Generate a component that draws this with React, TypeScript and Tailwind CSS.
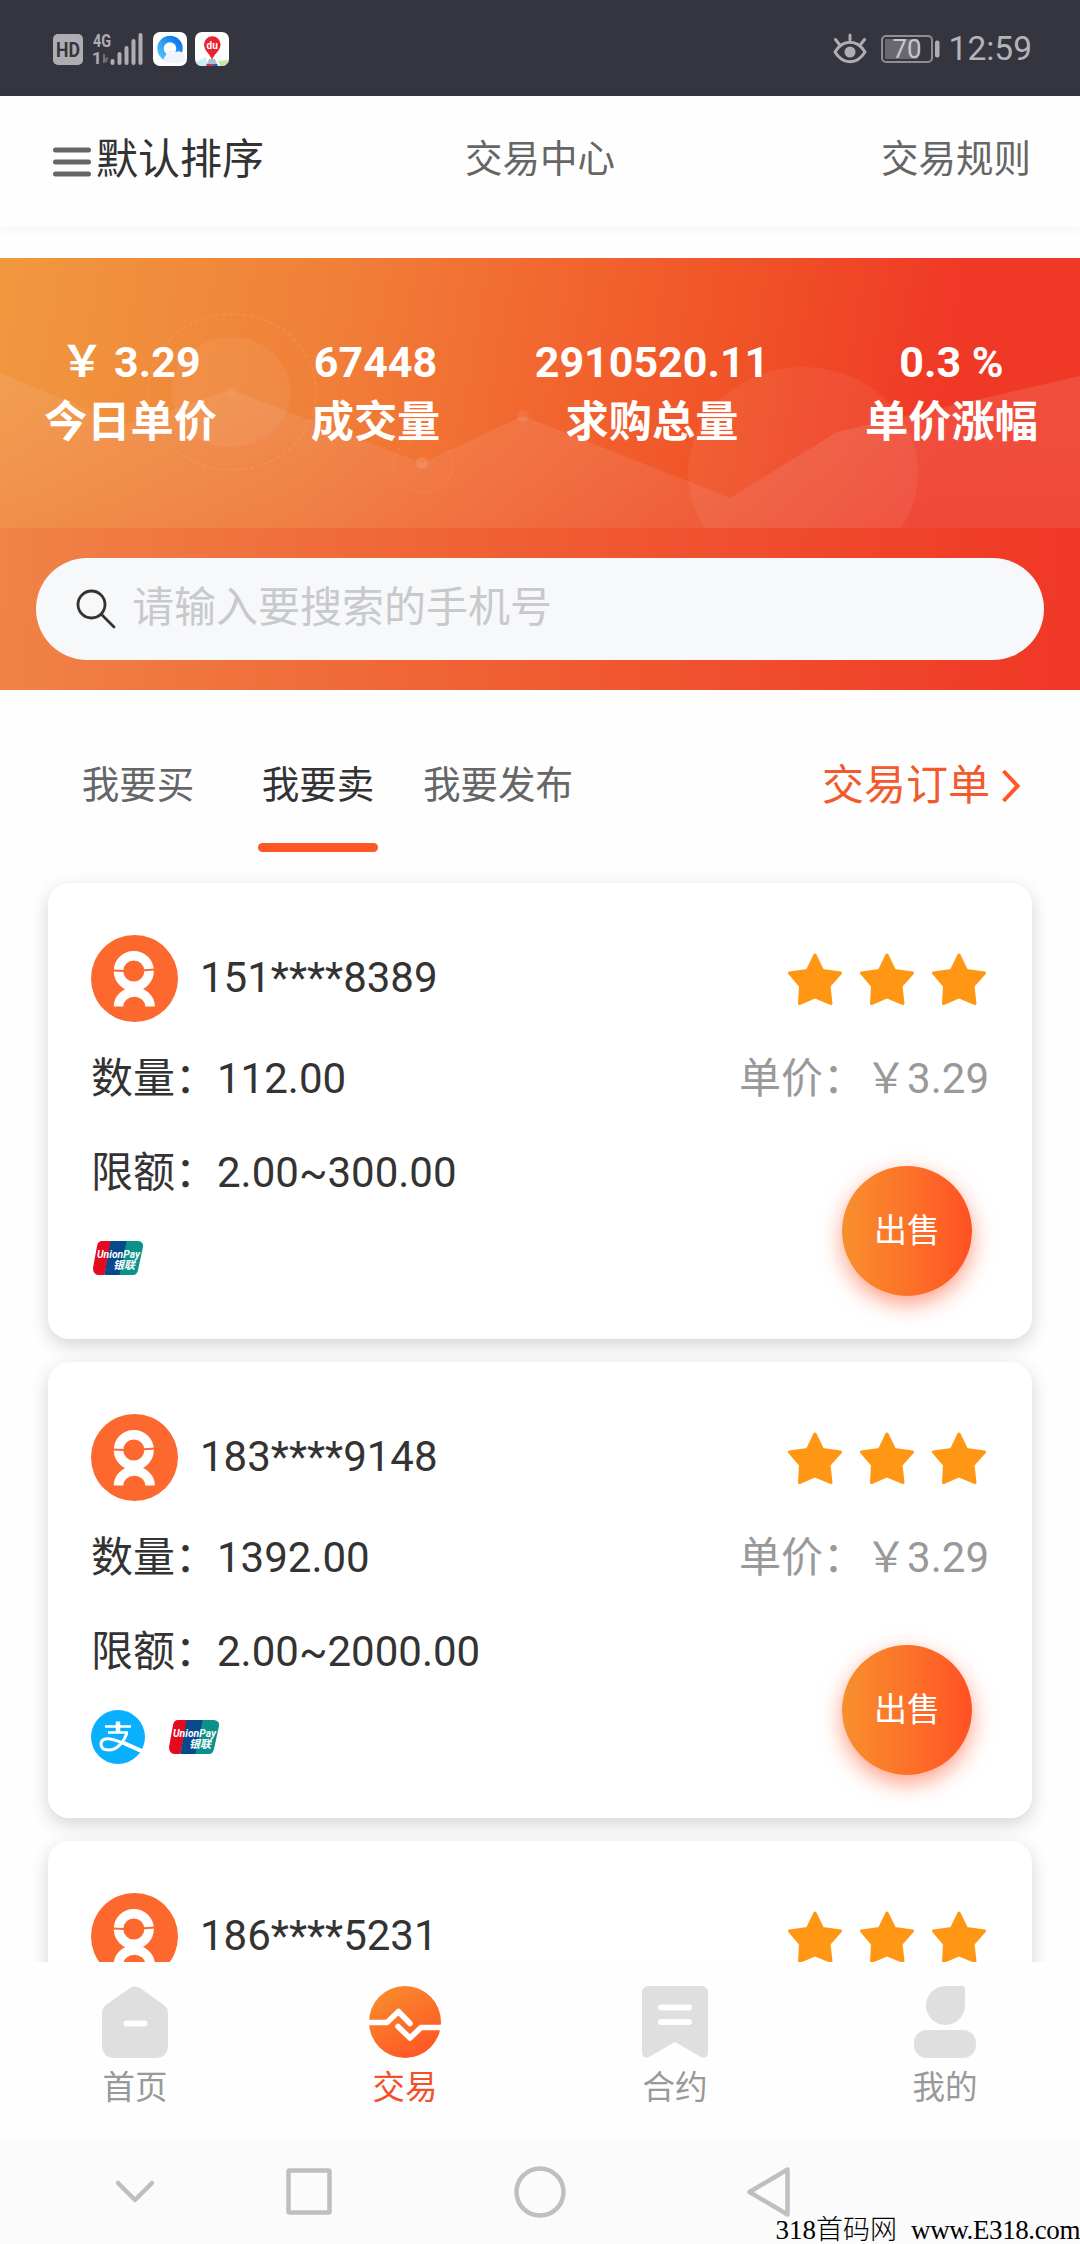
import type { ReactNode } from 'react'

type PayMethod = 'alipay' | 'unionpay'

interface OrderDetail {
  amount: string
  limit: string
  price: string
  methods: PayMethod[]
}

interface Order {
  phone: string
  detail?: OrderDetail
}

const STATS = [
  { value: '￥ 3.29', label: '今日单价', className: 'w-[261px]' },
  { value: '67448', label: '成交量', className: 'w-[229px]' },
  { value: '2910520.11', label: '求购总量', className: 'w-[324px]' },
  { value: '0.3 %', label: '单价涨幅', className: 'w-[275px]' },
]

const TABS = ['我要买', '我要卖', '我要发布']

const ORDERS: Order[] = [
  {
    phone: '151****8389',
    detail: { amount: '112.00', limit: '2.00~300.00', price: '3.29', methods: ['unionpay'] },
  },
  {
    phone: '183****9148',
    detail: { amount: '1392.00', limit: '2.00~2000.00', price: '3.29', methods: ['alipay', 'unionpay'] },
  },
  { phone: '186****5231' },
]

function StatusBar() {
  return (
    <div className="flex h-24 shrink-0 items-center justify-between bg-[#35353f] pt-[2px] pl-[53px] pr-[48px] text-[#b4b4b8]">
      <div className="flex items-center">
        <svg className="h-[31px] w-[30px] overflow-visible" viewBox="0 0 30 31">
          <rect width="30" height="31" rx="5" fill="#aeaeb2" />
          <text x="3" y="22.500" fontSize="20" fontWeight="700" textLength="24" lengthAdjust="spacingAndGlyphs" fill="#35353f">
            HD
          </text>
        </svg>
        <svg className="ml-[10px] h-[34px] w-[51px] overflow-visible" viewBox="0 0 51 34" fill="#aeaeb2">
          <text x="0" y="14.500" fontSize="19" fontWeight="700" textLength="18" lengthAdjust="spacingAndGlyphs">4G</text>
          <text x="-1" y="32" fontSize="17" fontWeight="700">1</text>
          <path d="M11 22v9M11 28l4-2M11 27l3 3" stroke="#6f6f77" strokeWidth="2" />
          <rect x="17.500" y="27" width="4" height="6" rx="2" />
          <rect x="24.500" y="20" width="4" height="13" rx="2" />
          <rect x="31.500" y="14" width="4" height="19" rx="2" />
          <rect x="38.500" y="7" width="4" height="26" rx="2" />
          <rect x="45.500" y="1" width="4" height="32" rx="2" />
        </svg>
        <svg className="ml-[9px] size-[34px]" viewBox="0 0 34 34">
          <defs>
            <linearGradient id="browser" x1="0" y1="1" x2="1" y2="0">
              <stop offset="0" stopColor="#4fc3fa" />
              <stop offset="1" stopColor="#0b72e8" />
            </linearGradient>
          </defs>
          <rect width="34" height="34" rx="7" fill="#fff" />
          <circle cx="17" cy="16.500" r="9.500" fill="none" stroke="url(#browser)" strokeWidth="6.500" />
          <path d="M12 31a6 6 0 0 1 1-8 6 6 0 0 1 10-3 6 6 0 0 1 8 8q0 3-5 3z" fill="#f1f5fb" />
        </svg>
        <svg className="ml-[8px] size-[34px] overflow-visible" viewBox="0 0 34 34">
          <rect width="34" height="34" rx="7" fill="#fff" />
          <path d="M1 30l10-5 2 9H7q-5 0-6-4z" fill="#cdeef0" />
          <path d="M33 28l-10 1 2 5h3q5-1 5-6z" fill="#c9e5a5" />
          <path d="M14 27h6l3 7H11z" fill="#a9bfd4" />
          <path d="M11.500 32h6v2h-6z" fill="#e02b3c" />
          <path d="M17.500 32h5v2h-5z" fill="#2c5fc4" />
          <path d="M17 28c-1-5-8-9-8-15.500a8.300 8.300 0 0 1 16.600 0C25.500 19 18 23 17 28z" fill="#e8232f" />
          <text x="17.200" y="16.500" fontSize="10" fontWeight="700" fill="#fff" textAnchor="middle">du</text>
        </svg>
      </div>
      <div className="flex items-center">
        <svg className="h-[32px] w-[34px]" viewBox="0 0 34 32" fill="none" stroke="#aeaeb2" strokeWidth="3" strokeLinecap="round">
          <path d="M2 19c8-13 22-13 30 0-8 13-22 13-30 0zM17 7V2M6 11L2.500 6.500M28 11l3.500-4.500" strokeLinejoin="round" />
          <circle cx="17" cy="19" r="5.500" fill="#aeaeb2" stroke="none" />
        </svg>
        <svg className="ml-[14px] h-[28px] w-[59px] overflow-visible" viewBox="0 0 59 28">
          <rect x="1" y="1" width="50" height="26" rx="4" fill="none" stroke="#8e8e94" strokeWidth="2" />
          <rect x="4" y="4" width="33" height="20" rx="1" fill="#68686f" />
          <rect x="54" y="5.500" width="4.500" height="17" rx="2" fill="#aeaeb2" />
          <text x="11.500" y="23" fontSize="26" textLength="29" lengthAdjust="spacingAndGlyphs" fill="#c8c8cc">70</text>
        </svg>
        <span className="ml-[9px] text-[33.500px]">12:59</span>
      </div>
    </div>
  )
}

function Header() {
  return (
    <header className="relative flex h-[130px] shrink-0 items-center justify-between pb-[3px] pl-[53px] pr-[49px] text-[37.5px] text-[#666] shadow-[0_2px_12px_rgba(0,0,0,0.05)]">
      <div className="flex w-[236px] items-center gap-[5px]">
        <svg className="mt-1 h-[30px] w-[38px]" viewBox="0 0 38 30" stroke="#666" strokeWidth="5" strokeLinecap="round">
          <path d="M2.500 3h33M2.500 15h33M2.500 27h33" />
        </svg>
        <span className="shrink-0 text-[42px] text-[#333]">默认排序</span>
      </div>
      <span>交易中心</span>
      <span className="w-[240px] text-right">交易规则</span>
    </header>
  )
}

function BannerArt() {
  return (
    <div className="absolute left-0 top-0 h-[270px] w-full bg-[linear-gradient(100deg,#f1983f_0%,#f08038_30%,#f26930_48%,#f05127_68%,#f03827_86%)]">
      <svg className="h-[270px] w-[1080px]" viewBox="0 0 1080 270" fill="#fff">
        <defs>
          <linearGradient id="hill" x1="0" y1="0" x2="0" y2="1">
            <stop offset="0" stopColor="#f3c3b0" stopOpacity="0.16" />
            <stop offset="1" stopColor="#ee7a70" stopOpacity="0.24" />
          </linearGradient>
        </defs>
        <path d="M0 115L125 167L231 132L422 205L523 158L730 240L837 174L1080 118V270H0z" fill="url(#hill)" />
        <ellipse cx="231" cy="134" rx="59.500" ry="55" fillOpacity="0.06" />
        <ellipse cx="232" cy="134" rx="84" ry="78" fill="none" stroke="#f5b070" strokeOpacity="0.3" strokeWidth="1.500" strokeDasharray="4 3" />
        <ellipse cx="423" cy="207" rx="30" ry="27" fill="none" stroke="#f5b070" strokeOpacity="0.25" strokeDasharray="4 3" />
        <circle cx="231" cy="133" r="5.500" fillOpacity="0.05" />
        <circle cx="422" cy="205" r="6" fillOpacity="0.12" />
        <circle cx="523" cy="158" r="6" fillOpacity="0.08" />
        <ellipse cx="803" cy="215" rx="115" ry="106" fillOpacity="0.06" />
      </svg>
    </div>
  )
}

function Banner() {
  return (
    <section className="relative mt-8 flex h-[432px] shrink-0 flex-col bg-[linear-gradient(92deg,#f08447_0%,#f05f33_47%,#f03826_98%)]">
      <BannerArt />
      <div className="relative -mr-2 flex h-[300px] pt-[77px] font-bold text-white">
        {STATS.map((stat) => (
          <div key={stat.label} className={`${stat.className} shrink-0 text-center`}>
            <div className="text-[43px] leading-[54px]">{stat.value}</div>
            <div className="text-[43.200px] leading-[68px]">{stat.label}</div>
          </div>
        ))}
      </div>
      <div className="relative mx-9 flex h-[102px] items-center rounded-full bg-[#f7f8fa] pl-[40px]">
        <svg className="size-[40px]" viewBox="0 0 40 40" fill="none" stroke="#333" strokeWidth="2.800" strokeLinecap="round">
          <circle cx="15.500" cy="15.500" r="13.500" />
          <path d="M25.500 25.500L38 38" />
        </svg>
        <span className="ml-[16px] pb-[3px] text-[42px] text-[#c8c9cc]">请输入要搜索的手机号</span>
      </div>
    </section>
  )
}

function TabRow() {
  return (
    <div className="flex h-[193px] shrink-0 pl-12 pr-[58px] pt-[62px] text-[37.500px] text-[#666]">
      {TABS.map((tab, i) => (
        <div key={tab} className="flex w-[180px] flex-col items-center">
          <span className={`leading-[66px] ${i === 1 ? 'text-[#333]' : ''}`}>{tab}</span>
          {i === 1 && <div className="mt-[25px] h-[9px] w-[120px] rounded-full bg-[#ff5626]" />}
        </div>
      ))}
      <div className="ml-auto flex h-[66px] items-center gap-[11px] text-[42px] text-[#f2592c]">
        交易订单
        <svg className="mt-[2px] h-[34px] w-[21px]" viewBox="0 0 21 34" fill="none" stroke="#ff5626" strokeWidth="4">
          <path d="M2.500 2l14 15L2.500 32" />
        </svg>
      </div>
    </div>
  )
}

function Avatar() {
  return (
    <svg className="size-[87px]" viewBox="0 0 87 87" fill="none" stroke="#fff">
      <circle cx="43.500" cy="43.500" r="43.500" fill="#fd682f" stroke="none" />
      <circle cx="42.800" cy="36" r="15.300" strokeWidth="9.500" />
      <path d="M27.500 71.500a15.800 14.500 0 0 1 31.600 0" strokeWidth="9.500" />
      <path d="M22 35.500l11 0.500M53 35.200l11-0.700" stroke="#fd682f" strokeWidth="2" />
    </svg>
  )
}

function Star() {
  return (
    <svg className="h-[52px] w-[54px]" viewBox="0 0 54 52" fill="#ff9614" stroke="#ff9614" strokeWidth="3" strokeLinejoin="round">
      <path d="M27 2L34.500 17.500L52.500 20L41 33L43 50.500L27 43.800L11.500 50.500L12.500 33L1.500 20L19.500 17.500z" />
    </svg>
  )
}

function AlipayIcon() {
  return (
    <svg className="size-[54px]" viewBox="0 0 54 54" fill="none" stroke="#fff">
      <circle cx="27" cy="27" r="27" fill="#08b0fd" stroke="none" />
      <path d="M14 16.500h26M17 22.500h20" strokeWidth="2.500" />
      <path d="M27 11.500v11" strokeWidth="4.500" />
      <path d="M36 23c-3 9-10 17-18 17-6 0-8-3-8-6 0-4 4-6 9-5 8 1 17 6 30 12" strokeWidth="3" />
      <path d="M33 33l18 8" strokeWidth="4" />
    </svg>
  )
}

function UnionPayIcon() {
  return (
    <svg className="size-[54px] overflow-visible" viewBox="0 0 54 54">
      <defs>
        <clipPath id="upcard">
          <path d="M11 10H47q6 1 5 6L47 39q-1 5-5 5H7q-5-1-5-7L6 15q1-5 5-5z" />
        </clipPath>
      </defs>
      <g clipPath="url(#upcard)">
        <path d="M0 8h21l-8 38H0z" fill="#e60a1e" />
        <path d="M20 8h18l-8 38H13z" fill="#08498b" />
        <path d="M36 8h20v38H28z" fill="#0a918c" />
      </g>
      <g fill="#fff" fontWeight="700" fontStyle="italic">
        <text x="6" y="27" fontSize="11" textLength="43" lengthAdjust="spacingAndGlyphs">UnionPay</text>
        <text x="22" y="37.500" fontSize="11">银联</text>
      </g>
    </svg>
  )
}

function OrderCard({ phone, detail }: Order) {
  return (
    <article className="h-[456px] shrink-0 rounded-[21px] bg-white px-[43px] pt-[52px] text-[42px] text-[#333] shadow-[0_6px_18px_rgba(0,0,0,0.17)]">
      <div className="flex h-[87px] items-center gap-[22px]">
        <Avatar />
        <span className="pb-[2px]">{phone}</span>
        <div className="ml-auto mr-[3px] flex gap-[18px]">
          <Star />
          <Star />
          <Star />
        </div>
      </div>
      {detail && (
        <div className="mt-[26px] flex justify-between leading-[62px]">
          <div>
            <div>数量：{detail.amount}</div>
            <div className="mt-[32px]">限额：{detail.limit}</div>
            <div className="mt-[27px] flex gap-[22px]">
              {detail.methods.map((m) => (m === 'alipay' ? <AlipayIcon key={m} /> : <UnionPayIcon key={m} />))}
            </div>
          </div>
          <div className="flex flex-col items-end">
            <div className="text-[#999]">单价：￥{detail.price}</div>
            <button
              type="button"
              className="mr-[17px] mt-[56px] flex size-[130px] items-center justify-center rounded-full bg-linear-to-r from-[#f78f2e] to-[#ff5023] text-[33px] text-white shadow-[0_8px_22px_rgba(255,80,35,0.55)]"
            >
              出售
            </button>
          </div>
        </div>
      )}
    </article>
  )
}

function NavItem({ label, active, children }: { label: string; active?: boolean; children: ReactNode }) {
  return (
    <div className={`flex w-[270px] flex-col items-center text-[32.500px] ${active ? 'text-[#f2502c]' : 'text-[#999]'}`}>
      <svg className="h-[72px] w-[72px]" viewBox="0 0 72 72" fill="#dfdfdf">
        {children}
      </svg>
      <span className="mt-[6px] leading-[48px]">{label}</span>
    </div>
  )
}

function BottomNav() {
  return (
    <nav className="relative flex h-[179px] shrink-0 bg-[#fefefe] pt-6">
      <NavItem label="首页">
        <path d="M31 2q5-3 10 0L65 19q4 3 4 9V61q-1 10-11 11H14Q4 71 3 61V28q0-6 4-9z" />
        <path d="M27.500 37.500h18" stroke="#fff" strokeWidth="6" strokeLinecap="round" />
      </NavItem>
      <NavItem label="交易" active>
        <defs>
          <linearGradient id="trade" x1="0.200" y1="0" x2="0.800" y2="1">
            <stop offset="0" stopColor="#f98c2c" />
            <stop offset="1" stopColor="#ff5326" />
          </linearGradient>
        </defs>
        <circle cx="36" cy="36" r="36" fill="url(#trade)" />
        <path d="M0 36.500h18L29.500 25.500L41 37.500M29 40.500L41 52L52 41.500H72" fill="none" stroke="#fff" strokeWidth="5.500" strokeLinejoin="round" strokeLinecap="round" />
      </NavItem>
      <NavItem label="合约">
        <path d="M9 0H63q6 1 6 6V67q-1 6-7 4L36 56L10 71q-6 2-7-4V6q0-5 6-6z" />
        <path d="M22 21.500H50M22 36H50" stroke="#fff" strokeWidth="6" strokeLinecap="round" />
      </NavItem>
      <NavItem label="我的">
        <path d="M36 0H53q3 0 3 3V20A19.500 19.500 0 1 1 36 0z" />
        <rect x="5" y="44" width="62" height="28" rx="13" />
      </NavItem>
    </nav>
  )
}

function SystemNav() {
  return (
    <div className="relative h-[103px] shrink-0 bg-[#fbfbfb]">
      <svg className="h-[103px] w-[1080px]" viewBox="0 0 1080 103" fill="none" stroke="#bfbfbf" strokeWidth="4.500" strokeLinecap="round" strokeLinejoin="round">
        <path d="M118 42L135 59L152 42" />
        <rect x="288.500" y="29.500" width="41" height="42" rx="1" />
        <circle cx="540" cy="51" r="23.500" />
        <path d="M787.500 28.500V73.500L749.500 51z" />
      </svg>
      <div className="absolute bottom-0 right-0 flex whitespace-pre font-['Liberation_Serif','Noto_Sans_CJK_SC',serif] text-[27px] leading-[27px] text-black">
        <span className="font-light">318首码网</span>
        <span className="ml-[14px] tracking-[-0.400px]">www.E318.com</span>
      </div>
    </div>
  )
}

export default function App() {
  return (
    <div className="flex h-[2244px] w-[1080px] flex-col overflow-hidden bg-[#fefefe] font-[Roboto,'Noto_Sans_CJK_SC',sans-serif]">
      <StatusBar />
      <Header />
      <Banner />
      <TabRow />
      <main className="-mt-5 flex h-[1099px] shrink-0 flex-col gap-[23px] overflow-hidden px-12 pt-5">
        {ORDERS.map((order) => (
          <OrderCard key={order.phone} {...order} />
        ))}
      </main>
      <BottomNav />
      <SystemNav />
    </div>
  )
}
